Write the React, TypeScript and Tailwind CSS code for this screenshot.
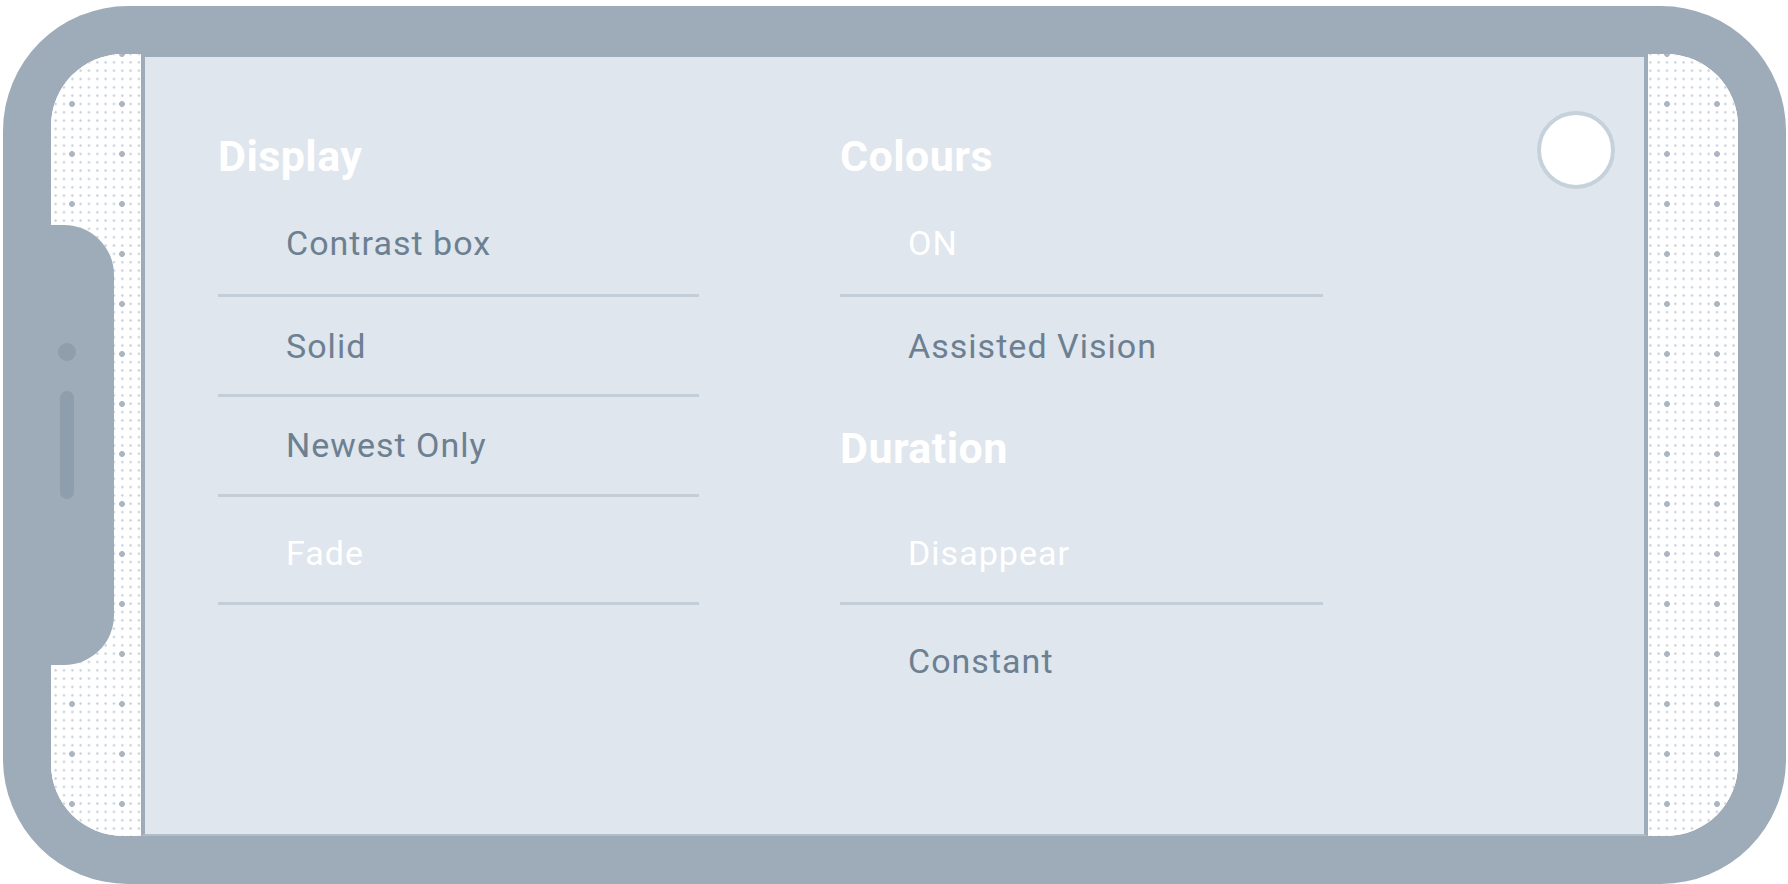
import React from 'react';

type OptionProps = {
  label: string;
  active?: boolean;
  className: string;
};

// single option row in a settings group
const Option: React.FC<OptionProps> = ({ label, active, className }) => (
  <div className={className}>
    <span
      className={`block pl-[68px] text-[34px] leading-[40px] tracking-[0.03em] ${
        active ? 'text-white' : 'text-[#6d8091]'
      }`}
    >
      {label}
    </span>
  </div>
);

const Heading: React.FC<{ children: React.ReactNode }> = ({ children }) => (
  <h2 className="h-[50px] text-[43px] leading-[50px] font-bold text-white tracking-[0.01em]">{children}</h2>
);

const DottedStrip: React.FC<{ side: 'left' | 'right' }> = ({ side }) =>
  side === 'left' ? (
    <div className="w-[90px] shrink-0 flex flex-col bg-white bg-[radial-gradient(circle,#aab7c3_0_2.6px,transparent_3.2px),radial-gradient(circle,#c9d3dc_0_0.9px,transparent_1.5px)] bg-[length:50px_50px,8.333px_8.333px] bg-[position:-4px_-25px,0.5px_-4.17px]">
      {/* notch */}
      <div className="mt-[171px] h-[440px] w-[63px] rounded-r-[50px] bg-[#9dacb8] flex">
        <div className="w-[32px] flex flex-col items-center">
          <div className="mt-[118px] w-[18px] h-[18px] rounded-full bg-[#8e9eac]" />
          <div className="mt-[30px] w-[14px] h-[108px] rounded-full bg-[#8e9eac]" />
        </div>
      </div>
    </div>
  ) : (
    <div className="w-[90px] shrink-0 bg-white bg-[radial-gradient(circle,#aab7c3_0_2.6px,transparent_3.2px),radial-gradient(circle,#c9d3dc_0_0.9px,transparent_1.5px)] bg-[length:50px_50px,8.333px_8.333px] bg-[position:-6px_-25px,-1.83px_-4.17px]" />
  );

export default function App() {
  return (
    <div className="w-[1788px] h-[884px] bg-white overflow-hidden pt-[6px] pl-[3px] font-['Roboto','Liberation_Sans',sans-serif]">
      <div className="w-[1783px] h-[878px] rounded-[125px] bg-[#9dacb8] p-[48px]">
        <div className="h-full rounded-[72px] bg-white overflow-hidden flex">
          <DottedStrip side="left" />

          {/* screen */}
          <div className="flex-1 flex bg-[#dfe6ed] border-x-4 border-t-[3px] border-b-2 border-[#9dacb8] border-b-[#b1bec9] pl-[73px]">
            <div className="w-[481px] shrink-0 pt-[74px] flex flex-col">
              <Heading>Display</Heading>
              <Option label="Contrast box" className="h-[116px] pt-[42px] border-b-[3px] border-[#c3ced8]" />
              <Option label="Solid" className="h-[100px] pt-[29px] border-b-[3px] border-[#c3ced8]" />
              <Option label="Newest Only" className="h-[100px] pt-[28px] border-b-[3px] border-[#c3ced8]" />
              <Option label="Fade" active className="h-[108px] pt-[36px] border-b-[3px] border-[#c3ced8]" />
            </div>

            <div className="w-[483px] shrink-0 ml-[141px] pt-[74px] flex flex-col">
              <Heading>Colours</Heading>
              <Option label="ON" active className="h-[116px] pt-[42px] border-b-[3px] border-[#c3ced8]" />
              <Option label="Assisted Vision" className="h-[126px] pt-[29px]" />
              <Heading>Duration</Heading>
              <Option label="Disappear" active className="h-[132px] pt-[60px] border-b-[3px] border-[#c3ced8]" />
              <Option label="Constant" className="h-[80px] pt-[36px]" />
            </div>

            <div className="ml-auto mr-[29px] mt-[54px] w-[78px] h-[78px] shrink-0 rounded-full bg-white border-4 border-[#c5d1db]" />
          </div>

          <DottedStrip side="right" />
        </div>
      </div>
    </div>
  );
}
